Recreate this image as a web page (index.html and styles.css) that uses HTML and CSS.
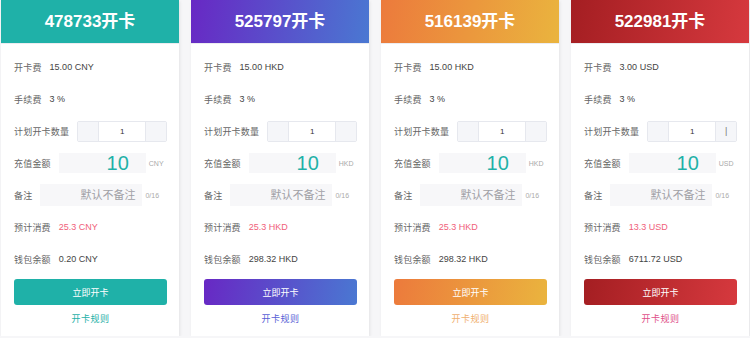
FILE: index.html
```html
<!DOCTYPE html>
<html lang="zh-CN">
<head>
  <meta charset="UTF-8">
  <title>开卡</title>
  <link rel="stylesheet" href="styles.css">
</head>
<body>
  <div class="cards">

    <div class="card teal">
      <div class="card-head">478733开卡</div>
      <div class="card-body">
        <div class="row"><span class="label">开卡费</span><span class="value">15.00 CNY</span></div>
        <div class="row"><span class="label">手续费</span><span class="value">3 %</span></div>
        <div class="row">
          <span class="label">计划开卡数量</span>
          <div class="stepper"><span class="step"></span><span class="count">1</span><span class="step"></span></div>
        </div>
        <div class="row">
          <span class="label">充值金额</span>
          <div class="amount">10</div><span class="unit">CNY</span>
        </div>
        <div class="row">
          <span class="label">备注</span>
          <div class="remark">默认不备注</div><span class="unit">0/16</span>
        </div>
        <div class="row"><span class="label">预计消费</span><span class="cost">25.3 CNY</span></div>
        <div class="row"><span class="label">钱包余额</span><span class="value">0.20 CNY</span></div>
        <button class="open-btn">立即开卡</button>
        <a class="rules" href="#">开卡规则</a>
      </div>
    </div>

    <div class="card purple">
      <div class="card-head">525797开卡</div>
      <div class="card-body">
        <div class="row"><span class="label">开卡费</span><span class="value">15.00 HKD</span></div>
        <div class="row"><span class="label">手续费</span><span class="value">3 %</span></div>
        <div class="row">
          <span class="label">计划开卡数量</span>
          <div class="stepper"><span class="step"></span><span class="count">1</span><span class="step"></span></div>
        </div>
        <div class="row">
          <span class="label">充值金额</span>
          <div class="amount">10</div><span class="unit">HKD</span>
        </div>
        <div class="row">
          <span class="label">备注</span>
          <div class="remark">默认不备注</div><span class="unit">0/16</span>
        </div>
        <div class="row"><span class="label">预计消费</span><span class="cost">25.3 HKD</span></div>
        <div class="row"><span class="label">钱包余额</span><span class="value">298.32 HKD</span></div>
        <button class="open-btn">立即开卡</button>
        <a class="rules" href="#">开卡规则</a>
      </div>
    </div>

    <div class="card orange">
      <div class="card-head">516139开卡</div>
      <div class="card-body">
        <div class="row"><span class="label">开卡费</span><span class="value">15.00 HKD</span></div>
        <div class="row"><span class="label">手续费</span><span class="value">3 %</span></div>
        <div class="row">
          <span class="label">计划开卡数量</span>
          <div class="stepper"><span class="step"></span><span class="count">1</span><span class="step"></span></div>
        </div>
        <div class="row">
          <span class="label">充值金额</span>
          <div class="amount">10</div><span class="unit">HKD</span>
        </div>
        <div class="row">
          <span class="label">备注</span>
          <div class="remark">默认不备注</div><span class="unit">0/16</span>
        </div>
        <div class="row"><span class="label">预计消费</span><span class="cost">25.3 HKD</span></div>
        <div class="row"><span class="label">钱包余额</span><span class="value">298.32 HKD</span></div>
        <button class="open-btn">立即开卡</button>
        <a class="rules" href="#">开卡规则</a>
      </div>
    </div>

    <div class="card red">
      <div class="card-head">522981开卡</div>
      <div class="card-body">
        <div class="row"><span class="label">开卡费</span><span class="value">3.00 USD</span></div>
        <div class="row"><span class="label">手续费</span><span class="value">3 %</span></div>
        <div class="row">
          <span class="label">计划开卡数量</span>
          <div class="stepper"><span class="step"></span><span class="count">1</span><span class="step">|</span></div>
        </div>
        <div class="row">
          <span class="label">充值金额</span>
          <div class="amount">10</div><span class="unit">USD</span>
        </div>
        <div class="row">
          <span class="label">备注</span>
          <div class="remark">默认不备注</div><span class="unit">0/16</span>
        </div>
        <div class="row"><span class="label">预计消费</span><span class="cost">13.3 USD</span></div>
        <div class="row"><span class="label">钱包余额</span><span class="value">6711.72 USD</span></div>
        <button class="open-btn">立即开卡</button>
        <a class="rules" href="#">开卡规则</a>
      </div>
    </div>

  </div>
</body>
</html>
```

FILE: styles.css
```css
body {
  margin: 0;
  font-family: "Liberation Sans", "Noto Sans CJK SC", sans-serif;
  background-color: #f6f6f8;
  overflow: hidden;
}

.cards {
  display: flex;
  gap: 12px;
  padding-left: 1px;
}

.card {
  width: 178px;
  flex-shrink: 0;
  height: 336px;
  background-color: white;
  box-shadow: 1px 1px 3px rgba(0, 0, 0, 0.08);
  display: flex;
  flex-direction: column;
}

.card-head {
  height: 43px;
  line-height: 43px;
  text-align: center;
  color: white;
  font-size: 17px;
  font-weight: bold;
  border-bottom: 1px solid #ececf0;
}

.card-body {
  padding: 7px 12px 0 13px;
  display: flex;
  flex-direction: column;
}

.row {
  height: 32px;
  display: flex;
  align-items: center;
  font-size: 9px;
  white-space: nowrap;
}

.label {
  flex-shrink: 0;
  color: #666;
  margin-right: 8px;
  letter-spacing: 0.2px;
}

.value {
  color: #444;
}

.cost {
  color: #f0607a;
}

.stepper {
  flex-shrink: 0;
  display: flex;
  width: 90px;
  height: 21px;
  border: 1px solid #e6e8ee;
  box-sizing: border-box;
  border-radius: 2px;
}

.step {
  width: 20px;
  background-color: #f5f6f9;
  color: #777;
  font-size: 9px;
  text-align: center;
  line-height: 19px;
}

.count {
  flex: 1;
  text-align: center;
  line-height: 19px;
  color: #333;
  font-size: 8px;
  border-left: 1px solid #e6e8ee;
  border-right: 1px solid #e6e8ee;
}

.amount {
  flex-shrink: 0;
  width: 87px;
  height: 20px;
  background-color: #f7f7f9;
  box-sizing: border-box;
  padding-right: 17px;
  text-align: right;
  color: #1fb1a8;
  font-size: 20px;
  line-height: 20px;
}

.remark {
  flex-shrink: 0;
  width: 102px;
  height: 22px;
  background-color: #f7f7f9;
  box-sizing: border-box;
  padding-right: 7px;
  text-align: right;
  color: #a0a0a6;
  font-size: 11px;
  line-height: 22px;
}

.unit {
  margin-left: 3px;
  color: #aaa;
  font-size: 7px;
}

.open-btn {
  margin-top: 4px;
  height: 26px;
  border: none;
  border-radius: 3px;
  color: white;
  font-family: inherit;
  font-size: 9px;
  cursor: pointer;
}

.rules {
  margin-top: 7px;
  text-align: center;
  font-size: 9px;
  text-decoration: none;
  letter-spacing: 0.5px;
}

.teal .card-head,
.teal .open-btn {
  background: #1fb1a8;
}

.teal .rules {
  color: #1fb1a8;
}

.purple .card-head,
.purple .open-btn {
  background: linear-gradient(100deg, #6828c4, #4a78d2);
}

.purple .rules {
  color: #5a5fd6;
}

.orange .card-head,
.orange .open-btn {
  background: linear-gradient(100deg, #ec7a3c, #eab43e);
}

.orange .rules {
  color: #f0b070;
}

.red .card-head,
.red .open-btn {
  background: linear-gradient(100deg, #a41e22, #d6393e);
}

.red .rules {
  color: #e0508a;
}
```
